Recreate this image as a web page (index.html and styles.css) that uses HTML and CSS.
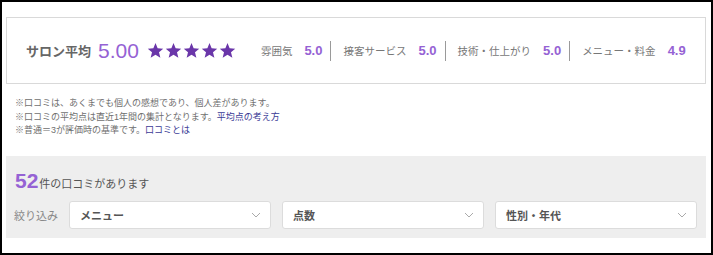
FILE: index.html
```html
<!DOCTYPE html>
<html lang="ja">
<head>
    <meta charset="UTF-8">
    <meta name="viewport" content="width=device-width, initial-scale=1.0">
    <title>口コミ</title>
    <link rel="stylesheet" href="styles.css">
</head>

<body>
    <div class="frame">
        <div class="summary">
            <span class="summary-label">サロン平均</span>
            <span class="summary-score">5.00</span>
            <span class="stars">
                <svg viewBox="0 0 20 20"><path d="M10 1.2l2.5 6.1 6.6.5-5 4.3 1.6 6.4L10 15l-5.7 3.5 1.6-6.4-5-4.3 6.6-.5z"/></svg>
                <svg viewBox="0 0 20 20"><path d="M10 1.2l2.5 6.1 6.6.5-5 4.3 1.6 6.4L10 15l-5.7 3.5 1.6-6.4-5-4.3 6.6-.5z"/></svg>
                <svg viewBox="0 0 20 20"><path d="M10 1.2l2.5 6.1 6.6.5-5 4.3 1.6 6.4L10 15l-5.7 3.5 1.6-6.4-5-4.3 6.6-.5z"/></svg>
                <svg viewBox="0 0 20 20"><path d="M10 1.2l2.5 6.1 6.6.5-5 4.3 1.6 6.4L10 15l-5.7 3.5 1.6-6.4-5-4.3 6.6-.5z"/></svg>
                <svg viewBox="0 0 20 20"><path d="M10 1.2l2.5 6.1 6.6.5-5 4.3 1.6 6.4L10 15l-5.7 3.5 1.6-6.4-5-4.3 6.6-.5z"/></svg>
            </span>
            <ul class="ratings">
                <li><span class="rating-name">雰囲気</span><span class="rating-value">5.0</span></li>
                <li><span class="rating-name">接客サービス</span><span class="rating-value">5.0</span></li>
                <li><span class="rating-name">技術・仕上がり</span><span class="rating-value">5.0</span></li>
                <li><span class="rating-name">メニュー・料金</span><span class="rating-value">4.9</span></li>
            </ul>
        </div>

        <div class="notes">
            <p>※口コミは、あくまでも個人の感想であり、個人差があります。</p>
            <p>※口コミの平均点は直近1年間の集計となります。<a href="#">平均点の考え方</a></p>
            <p>※普通＝3が評価時の基準です。<a href="#">口コミとは</a></p>
        </div>

        <div class="filter">
            <p class="count"><span class="count-num">52</span>件の口コミがあります</p>
            <div class="filter-row">
                <span class="filter-label">絞り込み</span>
                <div class="select">メニュー<svg viewBox="0 0 10 6"><path d="M1 1l4 4 4-4"/></svg></div>
                <div class="select">点数<svg viewBox="0 0 10 6"><path d="M1 1l4 4 4-4"/></svg></div>
                <div class="select">性別・年代<svg viewBox="0 0 10 6"><path d="M1 1l4 4 4-4"/></svg></div>
            </div>
        </div>
    </div>
</body>

</html>
```

FILE: styles.css
```css
body {
    margin: 0;
    font-family: "Liberation Sans", "Noto Sans CJK JP", sans-serif;
    background-color: #fff;
}

.frame {
    width: 713px;
    height: 255px;
    box-sizing: border-box;
    border: 2px solid #000;
    padding: 15px 5px 0 4px;
}

.summary {
    width: 700px;
    height: 67px;
    box-sizing: border-box;
    border: 1px solid #d9d9d9;
    display: flex;
    align-items: center;
    padding-left: 19px;
    white-space: nowrap;
}

.summary > * {
    flex-shrink: 0;
}

.summary-label {
    font-size: 13px;
    font-weight: bold;
    color: #666;
}

.summary-score {
    font-size: 21px;
    color: #9562d4;
    margin-left: 7px;
}

.stars {
    display: flex;
    gap: 1px;
    margin-left: 8px;
}

.stars svg {
    width: 17px;
    height: 17px;
    fill: #6a36a9;
}

.ratings {
    list-style: none;
    margin: 0 0 0 25px;
    padding: 0;
    display: flex;
    align-items: center;
}

.ratings li {
    display: flex;
    align-items: center;
    padding: 0 8px 0 12px;
    border-left: 1px solid #9a9a9a;
    line-height: 20px;
}

.ratings li:first-child {
    border-left: none;
    padding-left: 0;
}

.rating-name {
    font-size: 10.5px;
    color: #777;
}

.rating-value {
    font-size: 13px;
    font-weight: bold;
    color: #9562d4;
    margin-left: 12px;
}

.notes {
    padding: 13px 0 0 9px;
    height: 59px;
}

.notes p {
    margin: 0;
    font-size: 9px;
    line-height: 13.5px;
    color: #6f6f6f;
}

.notes a {
    color: #3b3b96;
    text-decoration: none;
}

.filter {
    width: 700px;
    height: 82px;
    box-sizing: border-box;
    background-color: #eeeeee;
    padding: 14px 9px 9px 8px;
}

.count {
    margin: 0 0 9px 1px;
    height: 22px;
    line-height: 22px;
    font-size: 11px;
    color: #555;
}

.count-num {
    font-size: 21px;
    font-weight: bold;
    color: #9562d4;
    margin-right: 1px;
}

.filter-row {
    display: flex;
    align-items: center;
    gap: 11px;
}

.filter-label {
    font-size: 11px;
    color: #888;
    white-space: nowrap;
}

.select {
    flex: 1;
    height: 28px;
    box-sizing: border-box;
    background-color: #fff;
    border: 1px solid #dcdcdc;
    border-radius: 3px;
    display: flex;
    align-items: center;
    justify-content: space-between;
    padding: 0 9px 0 10px;
    font-size: 11px;
    font-weight: bold;
    color: #555;
}

.select svg {
    width: 10px;
    height: 6px;
    fill: none;
    stroke: #aaa;
    stroke-width: 1;
}
```
